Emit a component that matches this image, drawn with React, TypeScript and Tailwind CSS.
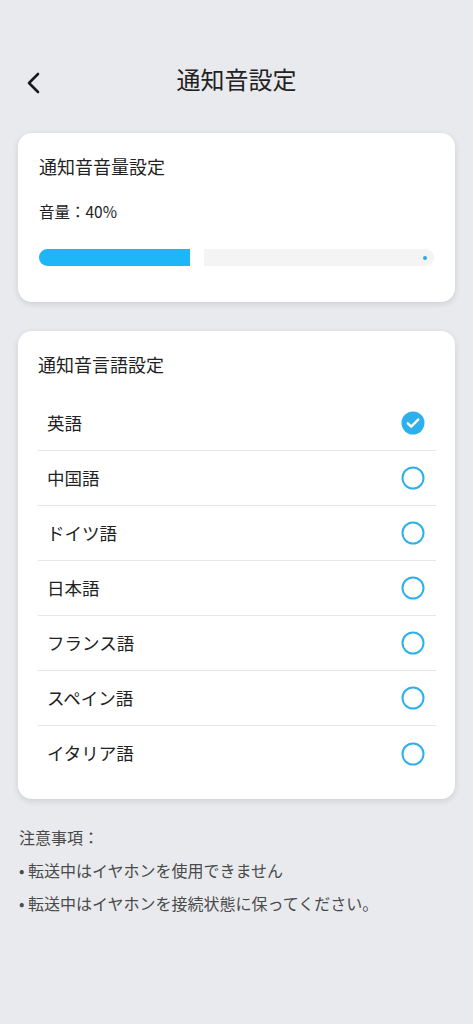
const languages = ["英語", "中国語", "ドイツ語", "日本語", "フランス語", "スペイン語", "イタリア語"];

function CheckIcon({ checked }: { checked: boolean }) {
  if (checked) {
    return (
      <svg width="24" height="24" viewBox="0 0 24 24">
        <circle cx="12" cy="12" r="11.5" fill="#2eb0ec" />
        <path d="M6.8 12.3l3.4 3.3 7-7" fill="none" stroke="#fff" strokeWidth="2.4" strokeLinecap="round" strokeLinejoin="round" />
      </svg>
    );
  }
  return (
    <svg width="24" height="24" viewBox="0 0 24 24">
      <circle cx="12" cy="12" r="10.5" fill="none" stroke="#2eb0ec" strokeWidth="2" />
    </svg>
  );
}

export default function App() {
  const volume = 40;
  return (
    <div
      className="min-h-[1024px] w-full bg-[#e9eaee] pt-[50px]"
      style={{ fontFamily: '"Noto Sans CJK JP", "Noto Sans", sans-serif' }}
    >
      {/* Header */}
      <div className="relative flex h-[60px] items-center justify-center">
        <button className="absolute left-[22px] top-[18px] p-1">
          <svg width="14" height="22" viewBox="0 0 14 22">
            <path d="M12 2L3 11l9 9" fill="none" stroke="#1a1a1a" strokeWidth="2.6" strokeLinecap="round" strokeLinejoin="round" />
          </svg>
        </button>
        <h1 className="-mt-[2px] text-[24px] font-normal text-[#222]">通知音設定</h1>
      </div>

      {/* Volume card */}
      <div className="mx-[18px] mt-[23px] rounded-[14px] bg-white px-[21px] pb-[36px] pt-[20px] shadow-[0_2px_6px_rgba(0,0,0,0.12)]">
        <p className="text-[18px] leading-[26px] text-[#222]">通知音音量設定</p>
        <p className="mt-[21px] text-[15.5px] leading-[22px] text-[#222]">音量：{volume}%</p>
        <div className="mt-[27px] flex h-[17px] items-center gap-[14px]">
          <div className="h-full w-[151px] rounded-l-full rounded-r-[2px] bg-[#1fb6f7]" />
          <div className="relative h-full flex-1 rounded-r-full bg-[#f4f4f5]">
            <span className="absolute right-[7px] top-[6.5px] h-[4px] w-[4px] rounded-full bg-[#2aa8e6]" />
          </div>
        </div>
      </div>

      {/* Language card */}
      <div className="mx-[18px] mt-[29px] rounded-[14px] bg-white px-[20px] pb-[18px] pt-[20px] shadow-[0_2px_6px_rgba(0,0,0,0.12)]">
        <p className="text-[18px] leading-[26px] text-[#222]">通知音言語設定</p>
        <div className="mt-[19px] mr-[-1px]">
          {languages.map((lang, i) => (
            <div
              key={lang}
              className={`flex h-[55px] items-center justify-between pl-[9px] pr-[11px] ${
                i < languages.length - 1 ? "border-b border-[#e6e6e6]" : ""
              }`}
            >
              <span className="text-[17.5px] text-[#222]">{lang}</span>
              <CheckIcon checked={i === 0} />
            </div>
          ))}
        </div>
      </div>

      {/* Notes */}
      <div className="mt-[22px] px-[19px] text-[16px] leading-[33px] text-[#4a4a4a]">
        <p>注意事項：</p>
        <p>• 転送中はイヤホンを使用できません</p>
        <p>• 転送中はイヤホンを接続状態に保ってください。</p>
      </div>
    </div>
  );
}
